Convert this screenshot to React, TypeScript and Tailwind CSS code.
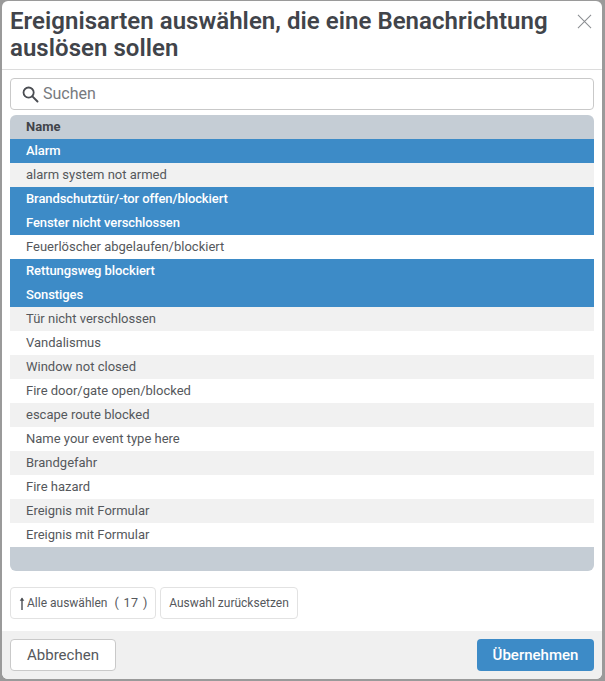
const rows = [
  { name: "Alarm", selected: true },
  { name: "alarm system not armed" },
  { name: "Brandschutztür/-tor offen/blockiert", selected: true },
  { name: "Fenster nicht verschlossen", selected: true },
  { name: "Feuerlöscher abgelaufen/blockiert" },
  { name: "Rettungsweg blockiert", selected: true },
  { name: "Sonstiges", selected: true },
  { name: "Tür nicht verschlossen" },
  { name: "Vandalismus" },
  { name: "Window not closed" },
  { name: "Fire door/gate open/blocked" },
  { name: "escape route blocked" },
  { name: "Name your event type here" },
  { name: "Brandgefahr" },
  { name: "Fire hazard" },
  { name: "Ereignis mit Formular" },
  { name: "Ereignis mit Formular" },
];

function rowClass(index: number, selected?: boolean) {
  if (selected) return "bg-[#3d8bc7] text-white font-medium tracking-[-0.085px]";
  return index % 2 === 1 ? "bg-[#f1f1f1] text-[#55585c]" : "bg-white text-[#55585c]";
}

function SearchIcon() {
  return (
    <svg viewBox="0 0 18 18" fill="none" className="size-[17px] text-[#4a4d52]" aria-hidden="true">
      <circle cx="7" cy="7" r="5.4" stroke="currentColor" strokeWidth="1.9" />
      <path d="M11 11L16.4 16.4" stroke="currentColor" strokeWidth="2.1" strokeLinecap="round" />
    </svg>
  );
}

function CloseIcon() {
  return (
    <svg viewBox="0 0 16 16" fill="none" className="size-[15px] text-[#8a8d91]" aria-hidden="true">
      <path d="M1 1L15 15M15 1L1 15" stroke="currentColor" strokeWidth="1.1" />
    </svg>
  );
}

function ArrowUpIcon() {
  return (
    <svg viewBox="0 0 6 14" fill="none" className="h-[13px] w-[6px] text-[#4a4d52]" aria-hidden="true">
      <path d="M3 14V1.5" stroke="currentColor" strokeWidth="1.5" />
      <path d="M0.5 4L3 0.5L5.5 4Z" fill="currentColor" />
    </svg>
  );
}

export default function App() {
  return (
    <div className="h-[681px] w-[605px] overflow-hidden bg-[#9a9a9a] pl-[2px] pr-[3px] pt-[1px] font-['Roboto',sans-serif]">
      <div className="flex h-[678px] w-[600px] flex-col overflow-hidden rounded-[6px] bg-white">
        <div className="flex h-[69px] shrink-0 items-start justify-between border-b border-[#dcdcdc] pl-[8px] pr-[10px] pt-[7px]">
          <h1 className="w-[560px] text-[24px] font-semibold leading-[27px] tracking-[0.04px] text-[#41444a]">
            Ereignisarten auswählen, die eine Benachrichtung auslösen sollen
          </h1>
          <button type="button" className="mt-[6px]" aria-label="Schließen">
            <CloseIcon />
          </button>
        </div>

        <div className="flex flex-1 flex-col px-[8px] pt-[8px]">
          <div className="flex h-[32px] items-center gap-[4px] rounded-[4px] border border-[#c9c9c9] bg-white pl-[11px]">
            <SearchIcon />
            <span className="text-[16px] text-[#777a7e]">Suchen</span>
          </div>

          <div className="mt-[5px] overflow-hidden rounded-[6px]">
            <div className="flex h-[24px] items-center bg-[#c5cdd5] pl-[16px] text-[13px] font-bold text-[#41444a]">
              Name
            </div>
            {rows.map((row, i) => (
              <div key={i} className={`flex h-[24px] items-center pl-[16px] text-[13px] ${rowClass(i, row.selected)}`}>
                {row.name}
              </div>
            ))}
            <div className="h-[24px] bg-[#c5cdd5]" />
          </div>

          <div className="mt-[16px] flex gap-[4px]">
            <button
              type="button"
              className="flex h-[32px] w-[146px] items-center gap-[2px] rounded-[4px] border border-[#e2e2e2] bg-white pl-[8px] text-[12px] text-[#55585c]"
            >
              <ArrowUpIcon />
              <span>Alle auswählen</span>
              <span className="ml-[5px] text-[12.5px] tracking-[0.4px] [word-spacing:1px]">( 17 )</span>
            </button>
            <button
              type="button"
              className="h-[32px] w-[138px] rounded-[4px] border border-[#e2e2e2] bg-white text-[12px] text-[#55585c]"
            >
              Auswahl zurücksetzen
            </button>
          </div>
        </div>

        <div className="flex h-[48px] shrink-0 items-center justify-between bg-[#f0f0f0] px-[8px]">
          <button
            type="button"
            className="h-[32px] w-[106px] rounded-[4px] border border-[#c9c9c9] bg-white text-[15px] text-[#55585c]"
          >
            Abbrechen
          </button>
          <button
            type="button"
            className="h-[32px] w-[117px] rounded-[4px] bg-[#3d8bc7] text-[15px] font-medium text-white"
          >
            Übernehmen
          </button>
        </div>
      </div>
    </div>
  );
}
